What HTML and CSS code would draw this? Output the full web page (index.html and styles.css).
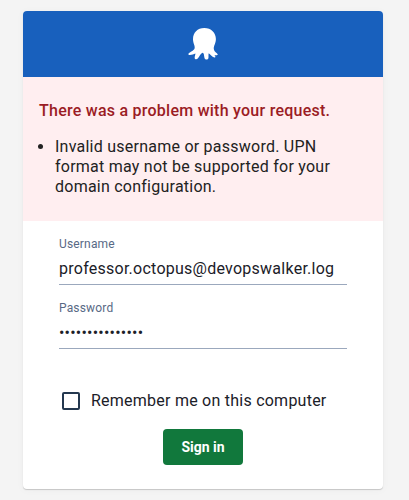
FILE: index.html
```html
<!DOCTYPE html>
<html lang="en">
<head>
<meta charset="utf-8">
<title>Sign in</title>
<link rel="stylesheet" href="styles.css">
</head>
<body>
<main class="card">
  <header class="header">
    <svg class="logo" viewBox="0 0 32 34" aria-hidden="true">
      <path d="M17.300 1C10.400 1 6 5.800 6 12C6 16.300 7.900 18 7.700 20.800C7.400 23.300 4.500 24.500 2 26C.9 27.200 1.300 28.200 2.700 28C5.200 27.900 6.700 27.400 8.400 26.500C8.500 28 7.400 29.400 7.700 31.200C8 32.700 9.900 32.600 11 31.200C12.700 29.200 13.900 26 15.600 25.800C17.200 26 16.900 29.200 17.700 31.500C18.300 33 21 33 21.400 31.300C21.700 29.800 21.300 27.700 21.700 26.200C23.200 27.200 25 30 27.300 30.500C29 30.700 28.600 29.500 27.400 28.100C29.200 28.500 31 28.300 30.700 27.200C30 26 27.200 25 26.800 22C26.500 18.800 28.900 16.500 28.900 12C28.900 5.800 24.200 1 17.300 1Z" fill="#fff"/>
    </svg>
  </header>
  <section class="error">
    <h1 class="error-title">There was a problem with your request.</h1>
    <ul class="error-list">
      <li>Invalid username or password. UPN format may not be supported for your domain configuration.</li>
    </ul>
  </section>
  <form class="form">
    <div class="field">
      <div class="label">Username</div>
      <div class="value">professor.octopus@devopswalker.log</div>
    </div>
    <div class="field">
      <div class="label">Password</div>
      <div class="value dots">•••••••••••••••</div>
    </div>
    <label class="remember"><span class="checkbox"></span>Remember me on this computer</label>
    <button class="submit" type="button">Sign in</button>
  </form>
</main>
</body>
</html>
```
FILE: styles.css
```css
* { box-sizing: border-box; }
body {
  margin: 0;
  height: 500px;
  padding: 11px 26px 0 23px;
  overflow: hidden;
  background: #f4f4f4;
  font-family: Roboto, sans-serif;
  font-size: 16px;
  color: #1b2028;
}
.card {
  height: 478px;
  overflow: hidden;
  border-radius: 4px;
  background: #fff;
  box-shadow: 0 1px 1px rgba(0, 0, 0, .18), 0 1px 10px rgba(0, 0, 0, .03);
}
.header {
  display: flex;
  justify-content: center;
  height: 66px;
  padding-top: 16px;
  background: #1860bd;
}
.logo { width: 32px; height: 34px; }
.error {
  height: 144px;
  padding: 24px 16px 0;
  background: #ffeef0;
}
.error-title {
  margin: 0 0 16px;
  font-size: 16px;
  line-height: 20px;
  font-weight: 500;
  letter-spacing: .25px;
  color: #9b1c24;
}
.error-list {
  margin: 0;
  padding-left: 16px;
  line-height: 20px;
  letter-spacing: .24px;
  color: #222;
}
.form {
  display: flex;
  flex-direction: column;
  padding: 16px 36px 0;
}
.field {
  height: 48px;
  margin-bottom: 16px;
  border-bottom: 1px solid #9ba8bd;
}
.label {
  font-size: 12px;
  line-height: 14px;
  letter-spacing: .17px;
  color: #586985;
}
.value {
  margin-top: 8px;
  line-height: 20px;
  letter-spacing: .25px;
}
.dots { letter-spacing: .22px; }
.remember {
  display: flex;
  align-items: center;
  height: 18px;
  margin-top: 27px;
  padding-left: 3px;
  line-height: 18px;
  letter-spacing: .24px;
}
.checkbox {
  width: 18px;
  height: 18px;
  margin-right: 11px;
  border: 2px solid #24384f;
  border-radius: 2px;
}
.submit {
  align-self: center;
  width: 80px;
  height: 36px;
  margin-top: 19px;
  padding: 0;
  border: 0;
  border-radius: 4px;
  background: #11783c;
  color: #fff;
  font: 700 14px/20px Roboto, sans-serif;
}
```
